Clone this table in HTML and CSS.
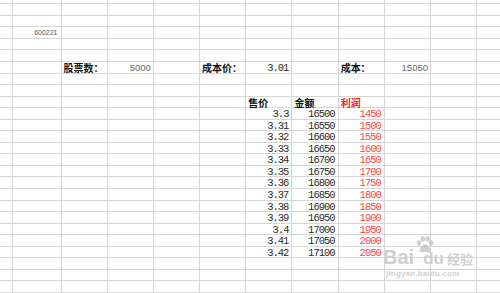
FILE: index.html
```html
<!DOCTYPE html>
<html>
<head>
    <meta charset="UTF-8">
    <title>股票成本计算</title>
<link rel="stylesheet" href="styles.css">
</head>
<body>
    <div class="page">
        <div class="sheet" id="sheet"></div>

        <div class="watermark">
            <svg class="paw" width="20" height="17" viewBox="0 0 20 17">
                <ellipse cx="4" cy="7" rx="2.2" ry="2.8"/>
                <ellipse cx="7.8" cy="3" rx="2.2" ry="2.8"/>
                <ellipse cx="12.6" cy="3" rx="2.2" ry="2.8"/>
                <ellipse cx="16.2" cy="7" rx="2.2" ry="2.8"/>
                <path d="M10 8.3 C7.4 8.3 4.6 12.6 4.6 14.4 C4.6 16.2 6.4 16.6 7.6 16.2 C8.8 15.8 11.2 15.8 12.4 16.2 C13.6 16.6 15.4 16.2 15.4 14.4 C15.4 12.6 12.6 8.3 10 8.3 Z"/>
            </svg>
            <div class="brand">
                <span class="bai">Bai</span><span class="du">du</span><span class="jy">经验</span>
            </div>
            <div class="site">jingyan.baidu.com</div>
        </div>
    </div>

<script>
    // cells: row -> { column: [text, class] }
    var cells = {
        3: { 1: ['600221', 'code'] },
        6: {
            2: ['股票数：', 'label'],
            3: ['5000', 'val'],
            5: ['成本价：', 'label'],
            6: ['3.01', 'num'],
            8: ['成本：', 'label'],
            9: ['15050', 'val']
        },
        9: {
            6: ['售价', 'label'],
            7: ['金额', 'label'],
            8: ['利润', 'label red']
        }
    };

    for (var i = 0; i < 13; i++) {
        var price = parseFloat((3.3 + i / 100).toFixed(2));
        cells[10 + i] = {
            6: [String(price), 'num'],
            7: [String(16500 + i * 50), 'num'],
            8: [String(1450 + i * 50), 'num red']
        };
    }

    var sheet = document.getElementById('sheet');
    for (var r = 0; r < 26; r++) {
        for (var c = 0; c < 12; c++) {
            var cell = document.createElement('div');
            cell.className = 'cell';
            var item = cells[r] && cells[r][c];
            if (item) {
                cell.textContent = item[0];
                cell.className += ' ' + item[1];
            }
            sheet.appendChild(cell);
        }
    }
</script>
</body>
</html>
```

FILE: styles.css
```css
body {
  margin: 0;
  background-color: #fff;
  font-family: "Liberation Mono", "Noto Sans CJK SC", monospace;
}

.page {
  position: relative;
  width: 500px;
  height: 293px;
  overflow: hidden;
}

.sheet {
  display: grid;
  grid-template-columns: 12.5px 49px repeat(10, 46.2px);
  grid-auto-rows: 11.56px;
  margin-top: -7.3px;
}

.cell {
  box-sizing: border-box;
  border-right: 1px solid #d6d6d6;
  border-bottom: 1px solid #d6d6d6;
  padding: 0 2px;
  font-size: 9.5px;
  line-height: 11.5px;
  white-space: nowrap;
  color: #222;
}

.label {
  font-family: "Noto Sans CJK SC", sans-serif;
  font-weight: bold;
  font-size: 10px;
  color: #111;
}

.num {
  text-align: right;
  font-size: 10.5px;
  line-height: 12.5px;
  letter-spacing: -1px;
  padding-right: 3px;
  color: #2a2a2a;
}

.val {
  text-align: right;
  font-family: "Liberation Sans", Arial, sans-serif;
  line-height: 12px;
  color: #666;
}

.code {
  text-align: right;
  font-family: "Liberation Sans", Arial, sans-serif;
  font-size: 7px;
  color: #555;
  padding-right: 3px;
}

.red {
  color: #ff4545;
}

.label.red {
  color: #f02020;
}

.watermark {
  position: absolute;
  left: 383px;
  top: 236px;
  width: 95px;
  color: rgba(190, 190, 190, 0.75);
  font-family: "Liberation Sans", Arial, sans-serif;
  text-shadow: 0 0 1px #fff;
}

.paw {
  position: absolute;
  left: 32px;
  top: 0;
  fill: rgba(190, 190, 190, 0.75);
}

.brand {
  padding-top: 13px;
  font-weight: bold;
  line-height: 16px;
  white-space: nowrap;
}

.bai {
  font-size: 20px;
}

.du {
  font-size: 17px;
  margin-left: 9px;
}

.jy {
  font-family: "Noto Sans CJK SC", sans-serif;
  font-size: 13px;
  margin-left: 3px;
}

.site {
  font-size: 8px;
  font-weight: bold;
  margin-top: 2px;
  padding-left: 3px;
  letter-spacing: 0.2px;
}
```
